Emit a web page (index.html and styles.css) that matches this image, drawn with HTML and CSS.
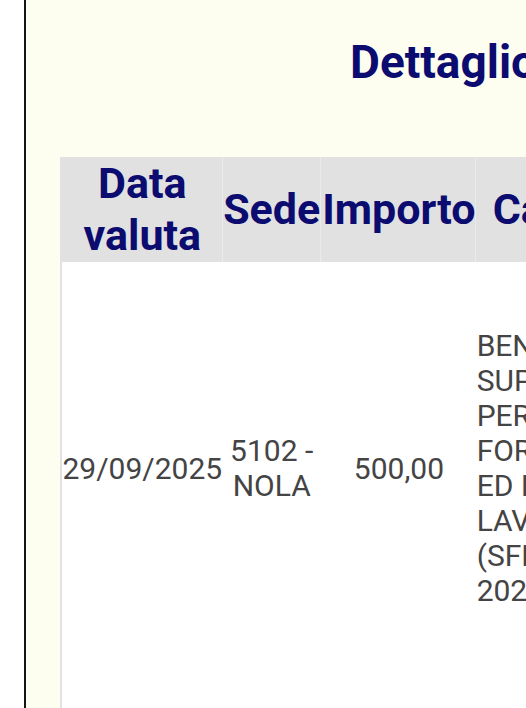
FILE: index.html
```html
<!DOCTYPE html>
<html lang="it">
<head>
<meta charset="utf-8">
<title>Dettaglio pagamenti</title>
<link rel="stylesheet" href="styles.css">
</head>
<body>
<div class="frame">
  <h2 class="title">Dettaglio pagamenti</h2>
  <table class="grid">
    <thead>
      <tr>
        <th>Data valuta</th>
        <th>Sede</th>
        <th>Importo</th>
        <th>Causale</th>
      </tr>
    </thead>
    <tbody>
      <tr class="row-main">
        <td>29/09/2025</td>
        <td>5102 - NOLA</td>
        <td>500,00</td>
        <td class="left">BENEFICIO SUPPORTO PER LA FORMAZIONE ED IL LAVORO (SFL)<br>2025</td>
      </tr>
      <tr class="row-next">
        <td></td><td></td><td></td><td></td>
      </tr>
    </tbody>
  </table>
</div>
</body>
</html>
```

FILE: styles.css
```css
html, body {
  margin: 0;
  padding: 0;
  overflow: hidden;
  background: #ffffff;
}

body {
  font-family: Roboto, "Liberation Sans", sans-serif;
}

.frame {
  margin-left: 24px;
  border-left: 2px solid #151515;
  background: #fdfdf0;
  padding: 0 0 0 34px;
  width: 900px;
  min-height: 720px;
}

.title {
  margin: 0;
  padding: 35px 0 0 290px;
  height: 157px;
  box-sizing: border-box;
  font-size: 46px;
  font-weight: 700;
  color: #0b0b70;
  white-space: nowrap;
}

.grid {
  border-collapse: collapse;
  background: #ffffff;
  border-left: 2px solid #e2e2e2;
  width: 600px;
}

.grid th {
  background: #e1e1e1;
  color: #0b0b70;
  font-size: 43px;
  line-height: 51.5px;
  font-weight: 700;
  padding: 1px 0.5px;
  text-align: center;
  box-shadow: inset -1px 0 0 #ebebeb;
}

.grid td {
  color: #444444;
  font-size: 30px;
  line-height: 35px;
  padding: 1px 0.5px;
  text-align: center;
  vertical-align: middle;
}

.grid td.left {
  text-align: left;
}

.row-main td {
  height: 410px;
}

.row-next td {
  height: 120px;
}
```
